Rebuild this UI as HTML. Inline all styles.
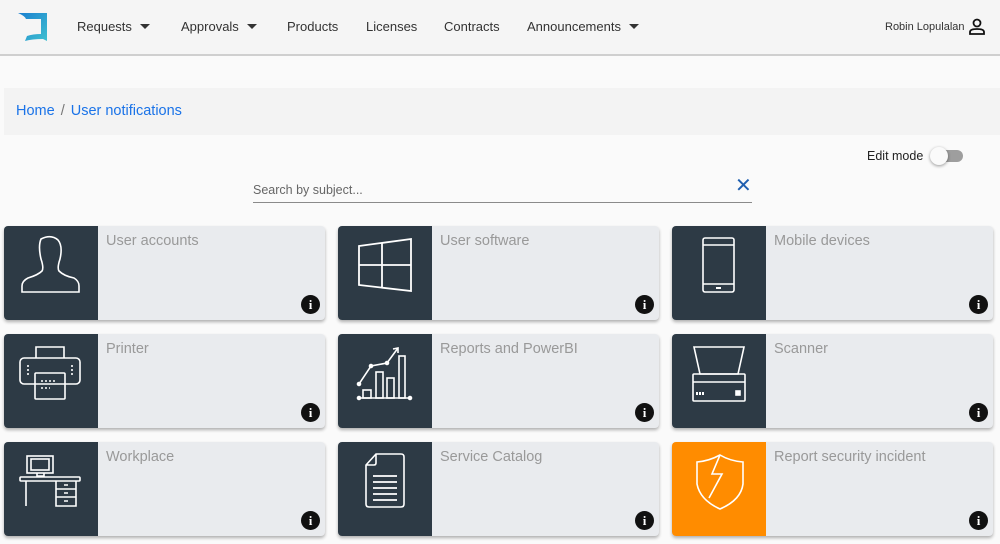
<!DOCTYPE html>
<html><head><meta charset="utf-8">
<style>
*{box-sizing:border-box;margin:0;padding:0}
body{width:1000px;height:544px;overflow:hidden;background:#fafafa;font-family:"Liberation Sans",Arial,sans-serif;position:relative}
.nav{position:absolute;left:0;top:0;width:1000px;height:56px;background:#f5f5f5;border-bottom:2px solid #cfcfcf}
.nav .it{position:absolute;top:19px;font-size:13px;color:#333}
.car{display:inline-block;width:0;height:0;border-left:5px solid transparent;border-right:5px solid transparent;border-top:5px solid #333;margin-left:8px;vertical-align:2px}
.bc{position:absolute;left:4px;top:88px;width:996px;height:47px;background:#f3f3f3;font-size:14.5px;color:#1a73e8;padding:15px 12px}
.bc span{color:#777;margin:0 6px}
.edit{position:absolute;left:867px;top:149px;font-size:12.5px;color:#222}
.tg{position:absolute;left:933px;top:150px;width:30px;height:12px;border-radius:6px;background:#9e9e9e}
.tg:after{content:"";position:absolute;left:-3px;top:-3px;width:18px;height:18px;border-radius:50%;background:#fafafa;box-shadow:0 1px 3px rgba(0,0,0,.4)}
.search{position:absolute;left:253px;top:176px;width:499px;height:27px;border-bottom:1px solid #8a8a8a;font-size:12.5px;color:#666;padding-top:7px}
.x{position:absolute;left:735px;top:173px;font-size:20px;color:#1f5fb0}
.card{position:absolute;width:321px;height:94px;background:#e9ebee;border-radius:4px;box-shadow:0 2px 3px rgba(0,0,0,.3);overflow:hidden}
.card .ic{position:absolute;left:0;top:0;width:94px;height:94px;background:#2d3a45}
.card .ic.o{background:#ff8c00}
.card .t{position:absolute;left:102px;top:7px;font-size:14.5px;color:#999}
.card .i{position:absolute;right:5px;bottom:6px;width:19px;height:19px;border-radius:50%;background:#111;color:#fff;font:bold 13px "Liberation Serif",serif;text-align:center;line-height:19px}
svg{position:absolute;left:0;top:0}
</style></head><body>
<div class="nav">
<svg width="50" height="50" style="left:16px;top:11px" viewBox="0 0 50 50"><defs><linearGradient id="g" x1="0" y1="0" x2="1" y2="1"><stop offset="0" stop-color="#1a7fd0"/><stop offset="1" stop-color="#3fc0d0"/></linearGradient></defs><path d="M2 2H31V30L27 28Q16 28 9 30L11 25Q17 23 25 23V8H10Q9 5 2 2Z" fill="url(#g)"/></svg>
<div class="it" style="left:77px">Requests<span class="car"></span></div>
<div class="it" style="left:181px">Approvals<span class="car"></span></div>
<div class="it" style="left:287px">Products</div>
<div class="it" style="left:366px">Licenses</div>
<div class="it" style="left:444px">Contracts</div>
<div class="it" style="left:527px">Announcements<span class="car"></span></div>
<div class="it" style="left:885px;font-size:11px;top:21px">Robin Lopulalan</div>
<svg width="20" height="20" style="left:968px;top:17px" viewBox="0 0 20 20" fill="none" stroke="#111" stroke-width="1.8"><circle cx="9" cy="6" r="3.5"/><path d="M2 17V15Q2 12 9 12Q16 12 16 15V17Z"/></svg>
</div>
<div class="bc">Home<span>/</span>User notifications</div>
<div class="edit">Edit mode</div><div class="tg"></div>
<div class="search">Search by subject...</div><div class="x">✕</div>

<div class="card" style="left:4px;top:226px"><div class="ic"><svg width="94" height="94" fill="none" stroke="#fff" stroke-width="1.6"><path d="M37 13Q47 8 54 14Q59 20 56 33Q53 42 55 45Q60 50 70 52Q75 55 75 60V66H18V60Q18 55 24 52Q34 49 38 45Q40 42 37 33Q34 20 37 13Z"/></svg></div><div class="t">User accounts</div><div class="i">i</div></div>
<div class="card" style="left:338px;top:226px"><div class="ic"><svg width="94" height="94" fill="none" stroke="#fff" stroke-width="1.8"><path d="M21 20L73 13V65L21 59Z M21 39H73 M44 17V62"/></svg></div><div class="t">User software</div><div class="i">i</div></div>
<div class="card" style="left:672px;top:226px"><div class="ic"><svg width="94" height="94" fill="none" stroke="#fff" stroke-width="1.6"><rect x="31" y="12" width="31" height="54" rx="2"/><path d="M31 19H62M31 58H62"/><path d="M44 62H49" stroke-width="2"/></svg></div><div class="t">Mobile devices</div><div class="i">i</div></div>

<div class="card" style="left:4px;top:334px"><div class="ic"><svg width="94" height="94" fill="none" stroke="#fff" stroke-width="1.6"><path d="M32 24V13H60V24"/><rect x="16" y="24" width="60" height="26" rx="4"/><rect x="31" y="39" width="30" height="26" rx="1"/><path d="M37 47H53M37 54H46M24 31V43M68 31V43" stroke-dasharray="2 2"/></svg></div><div class="t">Printer</div><div class="i">i</div></div>
<div class="card" style="left:338px;top:334px"><div class="ic"><svg width="94" height="94" fill="none" stroke="#fff" stroke-width="1.6"><path d="M21 64H72"/><circle cx="21" cy="64" r="1.5" fill="#fff"/><circle cx="72" cy="64" r="1.5" fill="#fff"/><rect x="25" y="56" width="8" height="8"/><rect x="38" y="38" width="7" height="26"/><rect x="49" y="44" width="7" height="20"/><rect x="61" y="22" width="6" height="42"/><path d="M21 50L33 32L49 29L60 14"/><path d="M55 15L60 14L60 19"/><circle cx="21" cy="50" r="1.5" fill="#fff"/><circle cx="33" cy="32" r="1.5" fill="#fff"/><circle cx="49" cy="29" r="1.5" fill="#fff"/></svg></div><div class="t">Reports and PowerBI</div><div class="i">i</div></div>
<div class="card" style="left:672px;top:334px"><div class="ic"><svg width="94" height="94" fill="none" stroke="#fff" stroke-width="1.6"><path d="M22 13H72L66 40H28Z"/><rect x="21" y="40" width="52" height="27" rx="1"/><path d="M21 48H73"/><path d="M25 58V61M28 58V61M31 58V61" stroke-width="2"/><rect x="64" y="57" width="4" height="4" fill="#fff"/></svg></div><div class="t">Scanner</div><div class="i">i</div></div>

<div class="card" style="left:4px;top:442px"><div class="ic"><svg width="94" height="94" fill="none" stroke="#fff" stroke-width="1.6"><rect x="23" y="14" width="26" height="17"/><rect x="27" y="17" width="18" height="11"/><path d="M33 31V34H40V31"/><rect x="16" y="35" width="60" height="4" rx="1"/><path d="M22 39V64M52 39V64H72V39M52 47H72M52 55H72M60 43H64M60 51H64M60 59H64"/></svg></div><div class="t">Workplace</div><div class="i">i</div></div>
<div class="card" style="left:338px;top:442px"><div class="ic"><svg width="94" height="94" fill="none" stroke="#fff" stroke-width="1.6"><path d="M38 12H63Q66 12 66 15V62Q66 65 63 65H31Q28 65 28 62V23Z M28 23H36Q38 23 38 21V12"/><path d="M35 34H59M35 40H59M35 46H59M35 52H59M35 58H59" stroke-width="1.8"/></svg></div><div class="t">Service Catalog</div><div class="i">i</div></div>
<div class="card" style="left:672px;top:442px"><div class="ic o"><svg width="94" height="94" fill="none" stroke="#fff" stroke-width="1.6"><path d="M48 13Q58 19 71 20V42Q69 58 48 67Q28 58 25 42V20Q37 19 48 13Z"/><path d="M48 13L40 32H50L37 56" /></svg></div><div class="t">Report security incident</div><div class="i">i</div></div>
</body></html>
